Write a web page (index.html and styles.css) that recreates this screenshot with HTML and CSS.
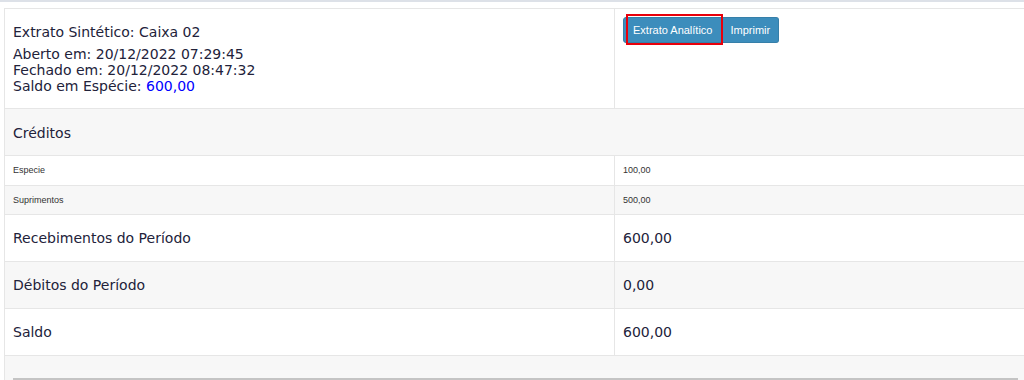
FILE: index.html
```html
<!DOCTYPE html>
<html>
<head>
<title>Extrato Sintético</title>
<link rel="stylesheet" href="styles.css">
</head>
<body>

<div class="page">
    <table class="extrato">
        <colgroup>
            <col class="col-label">
            <col>
        </colgroup>
        <tbody>
            <tr class="row-head">
                <td>
                    <div class="caixa-info">
                        <div class="caixa-title">Extrato Sintético: Caixa 02</div>
                        <div>Aberto em: 20/12/2022 07:29:45</div>
                        <div>Fechado em: 20/12/2022 08:47:32</div>
                        <div>Saldo em Espécie: <span class="valor-especie">600,00</span></div>
                    </div>
                </td>
                <td>
                    <div class="btn-group">
                        <button class="btn">Extrato Analítico</button>
                        <button class="btn">Imprimir</button>
                        <span class="highlight"></span>
                    </div>
                </td>
            </tr>
            <tr class="row-section">
                <td colspan="2">Créditos</td>
            </tr>
            <tr class="row-small">
                <td>Especie</td>
                <td>100,00</td>
            </tr>
            <tr class="row-small">
                <td>Suprimentos</td>
                <td>500,00</td>
            </tr>
            <tr class="row-total">
                <td>Recebimentos do Período</td>
                <td>600,00</td>
            </tr>
            <tr class="row-total">
                <td>Débitos do Período</td>
                <td>0,00</td>
            </tr>
            <tr class="row-total">
                <td>Saldo</td>
                <td>600,00</td>
            </tr>
            <tr class="row-foot">
                <td colspan="2"><div class="foot-rule"></div></td>
            </tr>
        </tbody>
    </table>
</div>

</body>
</html>
```

FILE: styles.css
```css
body {
    margin: 0;
    font-family: "DejaVu Sans", Verdana, sans-serif;
    font-size: 14px;
    color: #22223a;
    background-color: #fff;
    border-top: 2px solid #dde1e8;
}
.page {
    padding: 6px 0 0 4px;
}
.extrato {
    width: 100%;
    table-layout: fixed;
    border-collapse: collapse;
    border-left: 1px solid #e6e6e6;
    border-top: 1px solid #e6e6e6;
}
.col-label {
    width: 610px;
}
.extrato td {
    padding: 8px;
    vertical-align: top;
    border-bottom: 1px solid #e6e6e6;
    line-height: 16px;
}
.extrato td + td {
    border-left: 1px solid #e6e6e6;
}
.extrato tr:nth-child(even) {
    background-color: #f7f7f7;
}
.caixa-info {
    margin: 7px 0 6px;
}
.caixa-title {
    margin-bottom: 6px;
}
.valor-especie {
    color: #0000ff;
}
.btn-group {
    position: relative;
    display: inline-flex;
}
.btn {
    height: 26px;
    padding: 0 9px;
    font-family: "Liberation Sans", Arial, sans-serif;
    font-size: 11px;
    color: #fff;
    background-color: #3c8dbc;
    border: 1px solid #367fa9;
    cursor: pointer;
}
.btn:first-child {
    border-radius: 3px 0 0 3px;
}
.btn:last-of-type {
    padding: 0 8px;
    border-radius: 0 3px 3px 0;
    border-left: none;
}
.highlight {
    position: absolute;
    left: 3px;
    top: -3px;
    width: 93px;
    height: 27px;
    border: 2px solid #e8000b;
}
.row-section td {
    padding: 14px 8px 12px;
    line-height: 20px;
}
.row-small td {
    padding: 8px;
    font-family: "Liberation Sans", Arial, sans-serif;
    font-size: 9px;
    line-height: 13px;
    color: #333;
}
.row-small + .row-small td {
    padding-bottom: 7px;
}
.row-total td {
    padding: 13px 8px;
    line-height: 20px;
}
.row-foot td {
    padding: 22px 6px 0 8px;
    height: 24px;
    border-bottom: none;
}
.foot-rule {
    border-top: 3px solid #c4c4c4;
}
```
